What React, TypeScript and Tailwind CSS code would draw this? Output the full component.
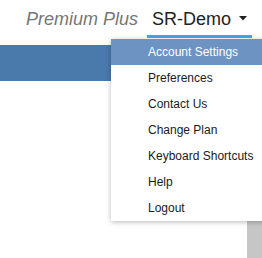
const MENU_ITEMS = [
  'Account Settings',
  'Preferences',
  'Contact Us',
  'Change Plan',
  'Keyboard Shortcuts',
  'Help',
  'Logout',
];

export default function App() {
  return (
    <div className="relative w-[262px] h-[258px] overflow-hidden bg-white font-['Liberation_Sans',Arial,sans-serif]">
      {/* Header */}
      <div className="flex h-[38px] items-start justify-end pr-[10px]">
        <span className="mt-[8px] mr-[9px] text-[18px] leading-[22px] italic text-[#767676]">Premium Plus</span>
        <div className="flex h-[38px] items-start border-b-[3px] border-[#43a6e6] px-[5px] pt-[8px]">
          <span className="text-[18px] leading-[22px] text-[#222]">SR-Demo</span>
          <svg className="ml-[8px] mt-[8px]" width="8" height="5" viewBox="0 0 8 5">
            <path d="M0 0 L8 0 L4 4.5 Z" fill="#222" />
          </svg>
        </div>
      </div>

      {/* Blue bar */}
      <div className="mt-[7px] h-[36px] bg-[#4a7aab]" />

      {/* Page content behind the menu */}
      <div className="flex h-[177px] justify-end">
        <div className="mt-[40px] w-[15px] bg-[#c6c6c6]" />
      </div>

      {/* Dropdown menu */}
      <div className="absolute left-[111px] top-[39px] w-[170px] bg-white shadow-[0_1px_5px_rgba(0,0,0,0.28)]">
        {MENU_ITEMS.map((item, idx) => (
          <div
            key={item}
            className={
              idx === 0
                ? 'flex h-[26px] items-center pl-[37px] text-[12px] text-white bg-[#6c93c1]'
                : 'flex h-[26px] items-center pl-[37px] text-[12px] text-[#1a1a1a]'
            }
          >
            {item}
          </div>
        ))}
      </div>
    </div>
  );
}
